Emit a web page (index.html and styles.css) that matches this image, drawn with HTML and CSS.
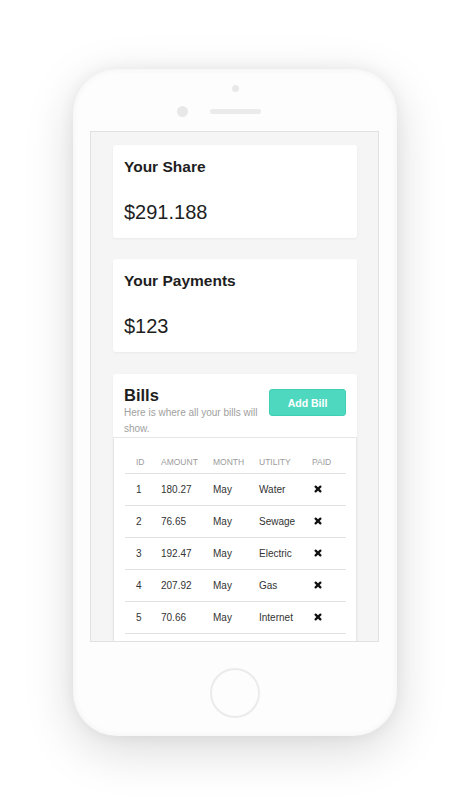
FILE: index.html
```html
<!DOCTYPE html>
<html>
<head>
<meta charset="utf-8">
<link rel="stylesheet" href="styles.css">
</head>
<body>
<div class="stage">
  <div class="phone">
    <span class="side-btn side-mute"></span>
    <span class="side-btn side-vol-up"></span>
    <span class="side-btn side-vol-down"></span>
    <span class="side-btn side-power"></span>
    <div class="phone-top">
      <span class="cam-dot"></span>
      <div class="ear-row">
        <span class="front-cam"></span>
        <span class="speaker"></span>
        <span></span>
      </div>
    </div>
    <div class="screen">
      <div class="card stat-card">
        <h2 class="card-title">Your Share</h2>
        <div class="card-value">$291.188</div>
      </div>
      <div class="card stat-card">
        <h2 class="card-title">Your Payments</h2>
        <div class="card-value">$123</div>
      </div>
      <div class="card bills-card">
        <div class="bills-head">
          <div class="bills-text">
            <h2 class="bills-title">Bills</h2>
            <p class="bills-sub">Here is where all your bills will show.</p>
          </div>
          <button class="add-btn">Add Bill</button>
        </div>
        <div class="table-box">
          <table class="bills-table">
            <colgroup>
              <col class="c-id"><col class="c-amt"><col class="c-month"><col class="c-util"><col class="c-paid">
            </colgroup>
            <thead>
              <tr><th>ID</th><th>Amount</th><th>Month</th><th>Utility</th><th>Paid</th></tr>
            </thead>
            <tbody>
              <tr><td>1</td><td>180.27</td><td>May</td><td>Water</td><td><svg class="x-icon" viewBox="0 0 10 10"><path d="M2 2 L8 8 M8 2 L2 8"/></svg></td></tr>
              <tr><td>2</td><td>76.65</td><td>May</td><td>Sewage</td><td><svg class="x-icon" viewBox="0 0 10 10"><path d="M2 2 L8 8 M8 2 L2 8"/></svg></td></tr>
              <tr><td>3</td><td>192.47</td><td>May</td><td>Electric</td><td><svg class="x-icon" viewBox="0 0 10 10"><path d="M2 2 L8 8 M8 2 L2 8"/></svg></td></tr>
              <tr><td>4</td><td>207.92</td><td>May</td><td>Gas</td><td><svg class="x-icon" viewBox="0 0 10 10"><path d="M2 2 L8 8 M8 2 L2 8"/></svg></td></tr>
              <tr><td>5</td><td>70.66</td><td>May</td><td>Internet</td><td><svg class="x-icon" viewBox="0 0 10 10"><path d="M2 2 L8 8 M8 2 L2 8"/></svg></td></tr>
            </tbody>
          </table>
        </div>
      </div>
    </div>
    <div class="home-btn"></div>
  </div>
</div>
</body>
</html>
```

FILE: styles.css
```css
* { box-sizing: border-box; }

html, body {
  margin: 0;
  padding: 0;
  background: #ffffff;
  font-family: "Liberation Sans", Arial, sans-serif;
}

.stage {
  width: 469px;
  height: 806px;
  padding: 69px 0 0 73px;
  overflow: hidden;
}

.phone {
  position: relative;
  width: 324px;
  height: 667px;
  border-radius: 44px;
  background: #fdfdfd;
  box-shadow: 0 14px 50px rgba(0, 0, 0, 0.15), 0 0 16px rgba(0, 0, 0, 0.06), inset 0 0 7px rgba(0, 0, 0, 0.05);
  display: flex;
  flex-direction: column;
  align-items: flex-start;
}

.side-btn {
  position: absolute;
  width: 4px;
  background: #fbfbfb;
  box-shadow: 0 0 1px rgba(0, 0, 0, 0.25);
  z-index: -1;
}
.side-mute { left: -3px; top: 84px; height: 25px; border-radius: 2px 0 0 2px; }
.side-vol-up { left: -3px; top: 141px; height: 48px; border-radius: 2px 0 0 2px; }
.side-vol-down { left: -3px; top: 203px; height: 50px; border-radius: 2px 0 0 2px; }
.side-power { right: -3px; top: 142px; height: 47px; border-radius: 0 2px 2px 0; }

.phone-top {
  width: 100%;
  height: 62px;
  padding-top: 16px;
  display: flex;
  flex-direction: column;
  align-items: center;
}

.cam-dot {
  width: 7px;
  height: 7px;
  border-radius: 50%;
  background: #e9e9e9;
  margin-left: 1px;
}

.ear-row {
  margin-top: 14px;
  width: 100%;
  display: grid;
  grid-template-columns: 1fr auto 1fr;
  align-items: center;
}

.front-cam {
  justify-self: end;
  width: 11px;
  height: 11px;
  border-radius: 50%;
  background: #e8e8e8;
  margin-right: 21px;
}

.speaker {
  width: 51px;
  height: 5px;
  border-radius: 3px;
  background: #ebebeb;
  margin-left: 1px;
}

.screen {
  margin-left: 17px;
  width: 289px;
  height: 511px;
  border: 1px solid #e1e1e1;
  background: #f5f5f5;
  overflow: hidden;
  padding: 13px 21px 0 22px;
  display: flex;
  flex-direction: column;
  gap: 21px;
}

.card {
  flex: none;
  background: #ffffff;
  border-radius: 3px;
  box-shadow: 0 1px 3px rgba(0, 0, 0, 0.05);
}

.stat-card {
  height: 93px;
  padding: 13px 11px 0 11px;
}

.card-title {
  margin: 0;
  font-size: 15.5px;
  line-height: 18px;
  font-weight: 700;
  color: #1e1e1e;
}

.card-value {
  margin-top: 24px;
  font-size: 20px;
  line-height: 24px;
  color: #1e1e1e;
}

.bills-card {
  margin-top: 1px;
}

.bills-head {
  display: flex;
  align-items: flex-start;
  gap: 9px;
  padding: 11px 11px 0 11px;
}

.bills-text {
  flex: 1;
  min-width: 0;
}

.bills-title {
  margin: 0;
  font-size: 16.5px;
  line-height: 20px;
  font-weight: 700;
  color: #1e1e1e;
}

.bills-sub {
  margin: 0;
  font-size: 10px;
  line-height: 16px;
  color: #a0a0a0;
}

.add-btn {
  flex: none;
  margin-top: 4px;
  width: 77px;
  height: 27px;
  border: 1px solid #3fcfb4;
  border-radius: 3px;
  background: #4fd8c0;
  color: #ffffff;
  font-family: "Liberation Sans", Arial, sans-serif;
  font-size: 10.5px;
  font-weight: 700;
  padding: 0;
}

.table-box {
  border: 1px solid #e6e6e6;
  border-bottom: none;
  padding: 13px 10px 20px 11px;
  background: #ffffff;
}

.bills-table {
  width: 221px;
  border-collapse: collapse;
  table-layout: fixed;
}

.c-id { width: 25px; }
.c-amt { width: 52px; }
.c-month { width: 46px; }
.c-util { width: 53px; }
.c-paid { width: 45px; }

.bills-table th {
  height: 22px;
  padding: 0 0 0 11px;
  text-align: left;
  font-weight: 400;
  font-size: 8.5px;
  text-transform: uppercase;
  color: #9c9c9c;
  border-bottom: 1px solid #e2e2e2;
  white-space: nowrap;
}

.bills-table td {
  height: 32px;
  padding: 0 0 0 11px;
  font-size: 10px;
  color: #333333;
  border-bottom: 1px solid #e2e2e2;
  white-space: nowrap;
  vertical-align: middle;
}

.x-icon {
  display: block;
  width: 8px;
  height: 8px;
  margin-left: 2px;
  fill: none;
  stroke: #111111;
  stroke-width: 2.8;
  stroke-linecap: round;
}

.home-btn {
  margin: 26px 0 0 137px;
  width: 50px;
  height: 50px;
  border-radius: 50%;
  border: 2px solid #ebebeb;
}
```
